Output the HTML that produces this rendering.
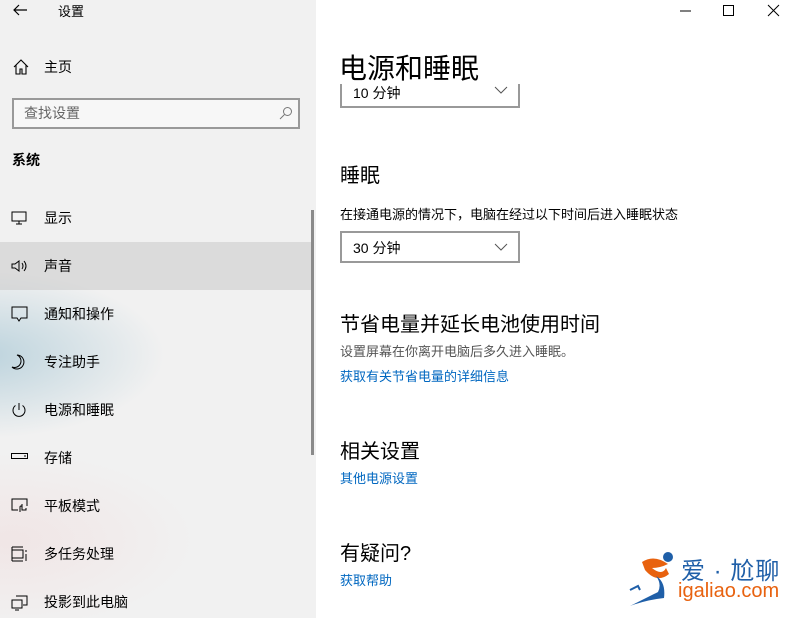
<!DOCTYPE html>
<html><head><meta charset="utf-8"><style>
*{margin:0;padding:0;box-sizing:border-box}
body{width:792px;height:618px;overflow:hidden;background:#fff;font-family:"Liberation Sans","Noto Sans CJK SC",sans-serif;color:#000;position:relative}
#side{position:absolute;left:0;top:0;width:316px;height:618px;background:#f1f1f1;overflow:hidden}
#side .g1{position:absolute;left:-110px;top:260px;width:300px;height:190px;background:radial-gradient(ellipse at 30% 50%,rgba(165,198,212,.7),rgba(241,241,241,0) 62%)}
#side .g2{position:absolute;left:-100px;top:440px;width:320px;height:200px;background:radial-gradient(ellipse at 35% 50%,rgba(240,218,218,.5),rgba(241,241,241,0) 62%)}
.t{position:absolute;font-size:14px;white-space:nowrap}
.ic{position:absolute;left:11px}
.sel{position:absolute;left:0;top:242px;width:314px;height:48px;background:rgba(200,200,200,.55)}
.sb{position:absolute;left:311px;top:210px;width:3px;height:245px;background:#8a8a8a}
.dd{position:absolute;left:340px;width:180px;height:32px;border:2px solid #999;font-size:14px;padding:5px 0 0 11px}
.dd svg{position:absolute;right:10px;top:10px}
.h{position:absolute;left:340px;font-size:20px}
.s{position:absolute;left:340px;font-size:13px;white-space:nowrap}
.a{color:#0067c0}
</style></head><body>
<div id="side"><div class="g1"></div><div class="g2"></div>
<div class="sel"></div><div class="sb"></div>
<svg class="ic" style="top:3px;left:12px" width="16" height="14"><path d="M15 7H2M7 2L2 7l5 5" stroke="#000" fill="none" stroke-width="1.2"/></svg>
<div class="t" style="left:58px;top:1px;font-size:13px">设置</div>
<svg class="ic" style="top:59px;left:13px" width="16" height="16"><path d="M1 8L8 1l7 7M3 6v9h4v-5h2v5h4V6" stroke="#000" fill="none" stroke-width="1.1"/></svg>
<div class="t" style="left:44px;top:57px">主页</div>
<div style="position:absolute;left:12px;top:98px;width:288px;height:31px;border:2px solid #999;background:#f7f7f7"></div>
<div class="t" style="left:24px;top:103px;color:#666">查找设置</div>
<svg style="position:absolute;left:279px;top:106px" width="14" height="14"><circle cx="8.5" cy="5.5" r="4" stroke="#777" fill="none"/><path d="M5.5 8.5L1 13" stroke="#777"/></svg>
<div class="t" style="left:12px;top:150px;font-weight:bold">系统</div>
<svg class="ic" style="top:211px" width="16" height="14"><path d="M1 1h14v9H1zM8 10v3M5 13h6" stroke="#000" fill="none"/></svg>
<div class="t" style="left:44px;top:208px">显示</div>
<svg class="ic" style="top:259px" width="18" height="14"><path d="M1 5h3l4-3v10l-4-3H1zM11 4q2 3 0 6M13 2q4 5 0 10" stroke="#000" fill="none"/></svg>
<div class="t" style="left:44px;top:256px">声音</div>
<svg class="ic" style="top:306px" width="18" height="16"><path d="M1 1h15v11H10l-2 3-2-3H1z" stroke="#000" fill="none"/></svg>
<div class="t" style="left:44px;top:304px">通知和操作</div>
<svg class="ic" style="top:354px" width="16" height="16"><path d="M6 1a7 7 0 1 1-5 12A6 6 0 0 0 6 1z" stroke="#000" fill="none"/></svg>
<div class="t" style="left:44px;top:352px">专注助手</div>
<svg class="ic" style="top:402px" width="16" height="16"><path d="M8 1v7M4.5 3.5a6 6 0 1 0 7 0" stroke="#000" fill="none"/></svg>
<div class="t" style="left:44px;top:400px">电源和睡眠</div>
<svg class="ic" style="top:453px" width="18" height="8"><rect x=".5" y=".5" width="16" height="5" stroke="#000" fill="none"/><path d="M13 3h2" stroke="#000"/></svg>
<div class="t" style="left:44px;top:448px">存储</div>
<svg class="ic" style="top:498px" width="18" height="16"><path d="M7 12H1V1h15v7M9 14v-5a1 1 0 0 1 2 0v-3 6h4v-2" stroke="#000" fill="none"/></svg>
<div class="t" style="left:44px;top:496px">平板模式</div>
<svg class="ic" style="top:546px" width="18" height="16"><path d="M1 1v14M1 1h11M1 15h11M1 4h11v8H1M15 4v2M15 8v7" stroke="#000" fill="none"/></svg>
<div class="t" style="left:44px;top:544px">多任务处理</div>
<svg class="ic" style="top:595px" width="18" height="16"><path d="M5 1h11v9h-4M1 5h10v8H1zM4 15h4" stroke="#000" fill="none"/></svg>
<div class="t" style="left:44px;top:592px">投影到此电脑</div>
</div>
<svg style="position:absolute;left:678px;top:4px" width="110" height="14"><path d="M2 7h11" stroke="#000"/><rect x="45.5" y="1.5" width="10" height="10" stroke="#000" fill="none"/><path d="M90 1l11 11M101 1L90 12" stroke="#000"/></svg>
<div class="dd" style="top:76px;border-top:none;padding-top:7px;height:32px">10 分钟<svg width="14" height="8"><path d="M1 1l6 6 6-6" stroke="#555" fill="none"/></svg></div>
<div style="position:absolute;left:320px;top:40px;width:472px;height:44px;background:#fff"></div>
<div style="position:absolute;left:339px;top:47px;font-size:28px">电源和睡眠</div>
<div class="h" style="top:159px">睡眠</div>
<div class="s" style="top:204px">在接通电源的情况下，电脑在经过以下时间后进入睡眠状态</div>
<div class="dd" style="top:231px">30 分钟<svg width="14" height="8"><path d="M1 1l6 6 6-6" stroke="#555" fill="none"/></svg></div>
<div class="h" style="top:308px">节省电量并延长电池使用时间</div>
<div class="s" style="top:341px;color:#555">设置屏幕在你离开电脑后多久进入睡眠。</div>
<div class="s a" style="top:366px">获取有关节省电量的详细信息</div>
<div class="h" style="top:435px">相关设置</div>
<div class="s a" style="top:468px">其他电源设置</div>
<div class="h" style="top:537px">有疑问?</div>
<div class="s a" style="top:570px">获取帮助</div>
<svg style="position:absolute;left:628px;top:548px" width="60" height="60"><circle cx="40" cy="9" r="5" fill="#1f5fa8"/><path d="M14 14q12-8 26 2q-8 4-16 4q10 8 14 0l3 6q-12 10-24-4z" fill="#e8620f"/><path d="M28 28q10 6 8 22q-18 2-34 8q20-10 28-14q4-8-2-16z" fill="#1f5fa8"/><path d="M2 42l8-4 2 4" stroke="#1f5fa8" fill="none" stroke-width="2"/></svg>
<div style="position:absolute;left:681px;top:551px;font-size:24px;color:#1f5fa8;white-space:nowrap;letter-spacing:1px">爱 · 尬聊</div>
<div style="position:absolute;left:678px;top:580px;font-size:20px;color:#e8620f">igaliao.com</div>
</body></html>
